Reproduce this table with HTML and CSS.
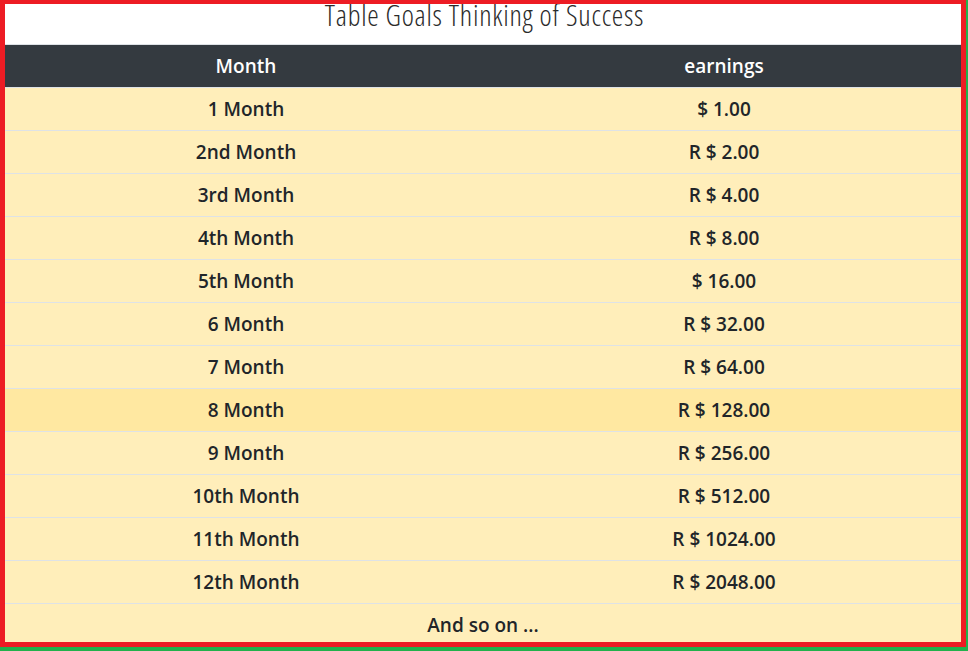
FILE: index.html
```html
<!DOCTYPE html>
<html>
<head>
<meta charset="utf-8">
<link rel="stylesheet" href="styles.css">
</head>
<body>
<div class="frame">
  <div class="viewport">
    <table class="goals">
      <caption>Table Goals Thinking of Success</caption>
      <thead>
        <tr><th class="col-month">Month</th><th>earnings</th></tr>
      </thead>
      <tbody>
        <tr><td>1 Month</td><td>$ 1.00</td></tr>
        <tr><td>2nd Month</td><td>R $ 2.00</td></tr>
        <tr><td>3rd Month</td><td>R $ 4.00</td></tr>
        <tr><td>4th Month</td><td>R $ 8.00</td></tr>
        <tr><td>5th Month</td><td>$ 16.00</td></tr>
        <tr><td>6 Month</td><td>R $ 32.00</td></tr>
        <tr><td>7 Month</td><td>R $ 64.00</td></tr>
        <tr class="hover"><td>8 Month</td><td>R $ 128.00</td></tr>
        <tr><td>9 Month</td><td>R $ 256.00</td></tr>
        <tr><td>10th Month</td><td>R $ 512.00</td></tr>
        <tr><td>11th Month</td><td>R $ 1024.00</td></tr>
        <tr><td>12th Month</td><td>R $ 2048.00</td></tr>
        <tr><td colspan="2">And so on ...</td></tr>
      </tbody>
    </table>
  </div>
</div>
</body>
</html>
```
FILE: styles.css
```css
html, body {
  margin: 0;
  padding: 0;
}
body {
  background: #22b14c;
  width: 968px;
  height: 651px;
  overflow: hidden;
}
.frame {
  box-sizing: border-box;
  width: 966px;
  height: 647px;
  border: 5px solid #ed1c24;
  border-top-width: 4px;
  background: #fff;
  overflow: hidden;
}
.viewport {
  margin-top: -1px;
}
.goals {
  width: 956px;
  border-collapse: collapse;
  font-family: "Open Sans", "Noto Sans", sans-serif;
  font-weight: 550;
  font-size: 19px;
  color: #212529;
  text-align: center;
}
.goals caption {
  caption-side: top;
  box-sizing: border-box;
  height: 41px;
  padding: 0 0 0 3px;
  font-family: "Open Sans", sans-serif;
  font-stretch: 75%;
  font-weight: 350;
  font-size: 29px;
  line-height: 24px;
  letter-spacing: 0.75px;
  color: #2b2b2b;
  text-align: center;
}
.goals th,
.goals td {
  height: 41px;
  padding: 0 0 1px;
  border-top: 1px solid #dee2e6;
  vertical-align: middle;
}
.goals th {
  background: #343a40;
  color: #fff;
  font-weight: 600;
  border-top-color: #dee2e6;
  border-bottom: 1px solid #dee2e6;
}
.goals .col-month {
  width: 482px;
}
.goals td {
  background: #ffeeba;
}
.goals tr.hover td {
  background: #ffe8a1;
}
```
